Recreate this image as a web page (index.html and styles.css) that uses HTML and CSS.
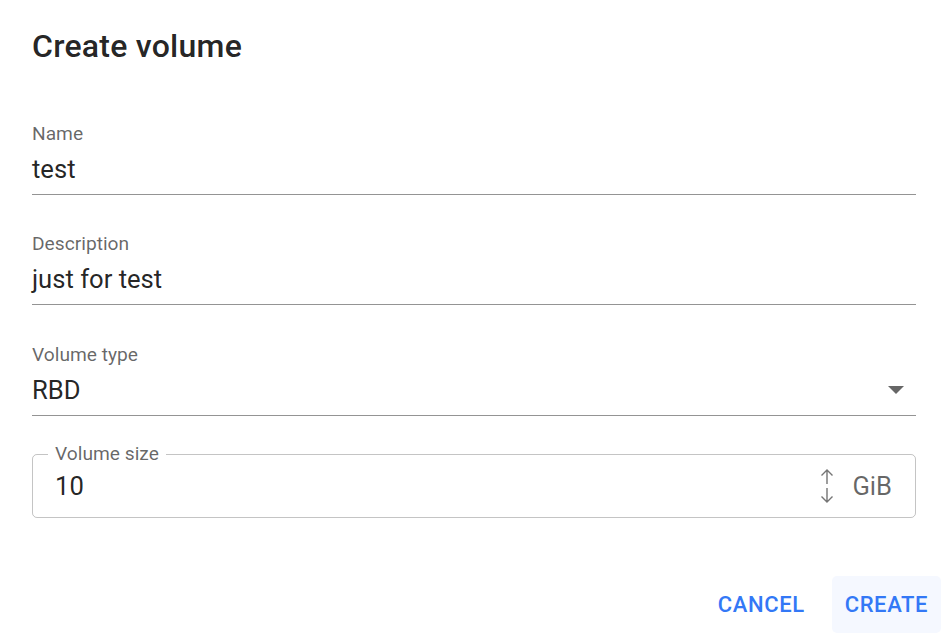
FILE: index.html
```html
<!DOCTYPE html>
<html lang="en">
<head>
    <meta charset="UTF-8">
    <meta name="viewport" content="width=device-width, initial-scale=1.0">
    <title>Create volume</title>
    <link rel="stylesheet" href="styles.css">
</head>
<body>
    <div class="dialog">
        <h2 class="dialog-title">Create volume</h2>

        <div class="dialog-content">
            <div class="field">
                <label class="field-label">Name</label>
                <div class="field-input">test</div>
            </div>

            <div class="field">
                <label class="field-label">Description</label>
                <div class="field-input">just for test</div>
            </div>

            <div class="field field-select">
                <label class="field-label">Volume type</label>
                <div class="field-input select">
                    <span>RBD</span>
                    <span class="caret"></span>
                </div>
            </div>

            <div class="outlined">
                <span class="outlined-label">Volume size</span>
                <span class="outlined-value">10</span>
                <svg class="spin" width="14" height="36" viewBox="0 0 14 36">
                    <path d="M7 2v14M1.5 7.5L7 2l5.5 5.5" fill="none" stroke="#757575" stroke-width="1.4"/>
                    <path d="M7 20v14M1.5 28.5L7 34l5.5-5.5" fill="none" stroke="#757575" stroke-width="1.4"/>
                </svg>
                <span class="unit">GiB</span>
            </div>
        </div>

        <div class="dialog-actions">
            <button class="btn">Cancel</button>
            <button class="btn hover">Create</button>
        </div>
    </div>
</body>
</html>
```

FILE: styles.css
```css
body {
    margin: 0;
    background: #fff;
    font-family: Roboto, "Liberation Sans", sans-serif;
    color: rgba(0, 0, 0, 0.87);
}
.dialog {
    width: 948px;
    height: 640px;
    box-sizing: border-box;
}
.dialog-title {
    margin: 0;
    padding: 26px 32px 0;
    font-size: 32px;
    font-weight: 500;
    line-height: 40px;
    letter-spacing: 0.25px;
}
.dialog-content {
    padding: 0 32px;
}
.field {
    margin-top: 37px;
}
.field:first-child {
    margin-top: 56px;
}
.field-select {
    margin-top: 38px;
}
.field-label {
    display: block;
    font-size: 19.2px;
    line-height: 24px;
    color: rgba(0, 0, 0, 0.6);
}
.field-input {
    padding: 8px 0 10px;
    font-size: 25.6px;
    line-height: 30px;
    border-bottom: 1px solid rgba(0, 0, 0, 0.42);
}
.select {
    display: flex;
    align-items: center;
    justify-content: space-between;
}
.caret {
    width: 0;
    height: 0;
    margin-right: 12px;
    border-left: 8px solid transparent;
    border-right: 8px solid transparent;
    border-top: 8px solid #666;
}
.outlined {
    position: relative;
    margin-top: 38px;
    height: 64px;
    box-sizing: border-box;
    border: 1px solid rgba(0, 0, 0, 0.23);
    border-radius: 5px;
    display: flex;
    align-items: center;
    padding: 0 23px 0 22px;
}
.outlined-label {
    position: absolute;
    left: 15px;
    top: -13px;
    padding: 0 7px;
    background: #fff;
    font-size: 19.2px;
    line-height: 24px;
    color: rgba(0, 0, 0, 0.6);
}
.outlined-value {
    flex: 1;
    font-size: 25.6px;
    line-height: 30px;
}
.spin {
    margin-right: 18px;
}
.unit {
    font-size: 25.6px;
    line-height: 30px;
    color: rgba(0, 0, 0, 0.6);
}
.dialog-actions {
    display: flex;
    justify-content: flex-end;
    gap: 14px;
    padding: 58px 7px 0 0;
}
.btn {
    font-family: Roboto, "Liberation Sans", sans-serif;
    font-size: 22px;
    font-weight: 500;
    letter-spacing: 0.6px;
    text-transform: uppercase;
    color: #3378f6;
    background: transparent;
    border: none;
    border-radius: 5px;
    height: 57px;
    padding: 0 13px;
    cursor: pointer;
}
.btn.hover {
    background: #f5f8ff;
}
```
